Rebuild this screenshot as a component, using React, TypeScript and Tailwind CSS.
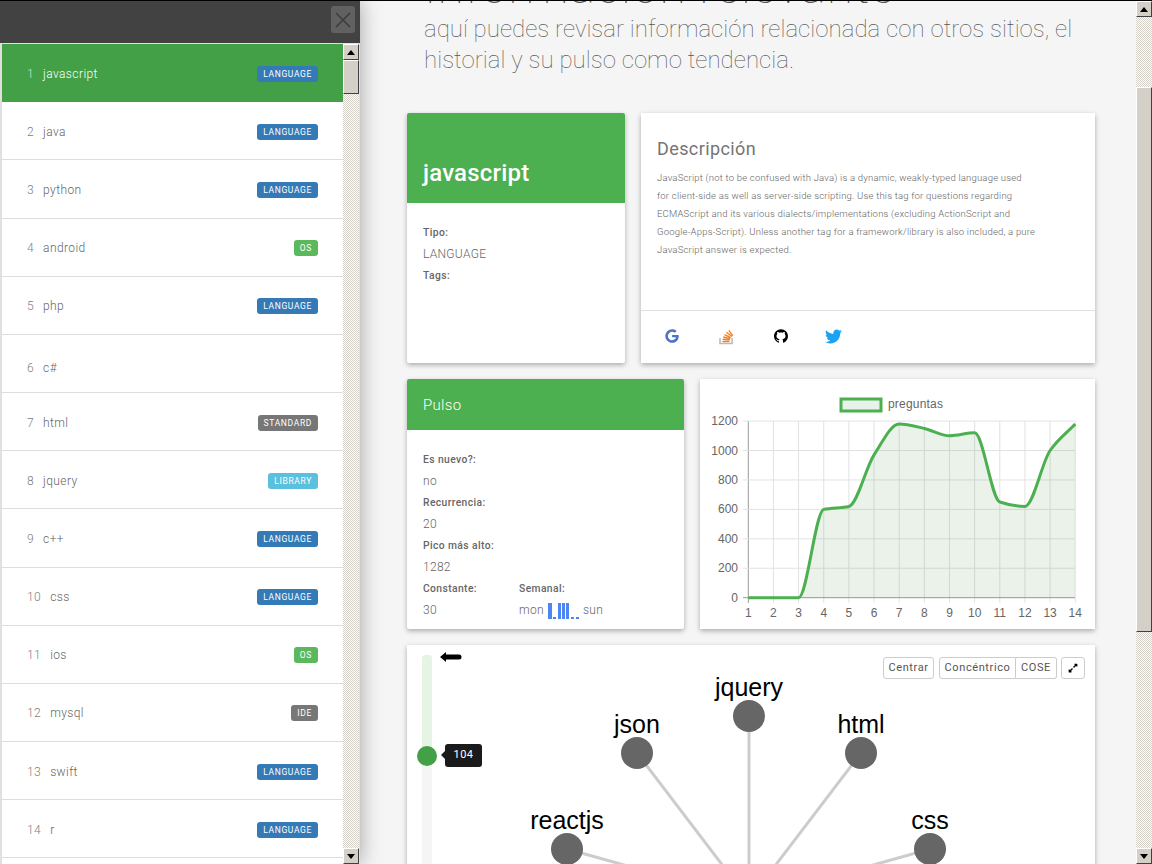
import { FaGoogle, FaTwitter, FaExpandAlt } from "react-icons/fa";
import { AiOutlineGithub } from "react-icons/ai";

const roboto = "font-['Roboto',sans-serif]";

const tags = [
  { n: 1, name: "javascript", badge: "LANGUAGE" },
  { n: 2, name: "java", badge: "LANGUAGE" },
  { n: 3, name: "python", badge: "LANGUAGE" },
  { n: 4, name: "android", badge: "OS" },
  { n: 5, name: "php", badge: "LANGUAGE" },
  { n: 6, name: "c#", badge: "" },
  { n: 7, name: "html", badge: "STANDARD" },
  { n: 8, name: "jquery", badge: "LIBRARY" },
  { n: 9, name: "c++", badge: "LANGUAGE" },
  { n: 10, name: "css", badge: "LANGUAGE" },
  { n: 11, name: "ios", badge: "OS" },
  { n: 12, name: "mysql", badge: "IDE" },
  { n: 13, name: "swift", badge: "LANGUAGE" },
  { n: 14, name: "r", badge: "LANGUAGE" },
];

const badgeColor: Record<string, string> = {
  LANGUAGE: "bg-[#337ab7]",
  OS: "bg-[#5cb85c]",
  STANDARD: "bg-[#777777]",
  LIBRARY: "bg-[#5bc0de]",
  IDE: "bg-[#777777]",
};

const values = [0, 0, 0, 600, 620, 970, 1180, 1150, 1100, 1120, 650, 620, 1000, 1180];
const baseY = 218.7;
const scaleY = 0.1472;

// monotone spline through the points
function linePath() {
  const pts = values.map((v, i) => [48.3 + i * 25.15, baseY - v * scaleY]);
  const dx = 25.15;
  const slopes = pts.slice(0, -1).map((p, i) => (pts[i + 1][1] - p[1]) / dx);
  const tangents = pts.map((_, i) => {
    if (i === 0) return slopes[0];
    if (i === pts.length - 1) return slopes[i - 1];
    const a = slopes[i - 1];
    const b = slopes[i];
    return a * b <= 0 ? 0 : (2 * a * b) / (a + b);
  });
  let d = `M${pts[0][0]} ${pts[0][1]}`;
  for (let i = 0; i < pts.length - 1; i++) {
    const p1 = pts[i];
    const p2 = pts[i + 1];
    d += ` C${p1[0] + dx / 3} ${p1[1] + (tangents[i] * dx) / 3} ${p2[0] - dx / 3} ${p2[1] - (tangents[i + 1] * dx) / 3} ${p2[0]} ${p2[1]}`;
  }
  return d;
}

function ScrollArrow({ up }: { up?: boolean }) {
  return (
    <div className="w-[16px] h-[16px] shrink-0 bg-[#d4d0c8] border border-t-white border-l-white border-r-[#404040] border-b-[#404040] flex items-center justify-center">
      <svg width="8" height="5" viewBox="0 0 8 5">
        <path d={up ? "M4 0 8 5H0Z" : "M0 0H8L4 5Z"} fill="#000" />
      </svg>
    </div>
  );
}

function Scrollbar({ before, thumb }: { before: string; thumb: string }) {
  return (
    <div className="w-[16px] shrink-0 h-full flex flex-col bg-[repeating-conic-gradient(#d4d0c8_0%_25%,#ffffff_0%_50%)] bg-[length:2px_2px]">
      <ScrollArrow up />
      <div className={before} />
      <div className={`${thumb} shrink-0 bg-[#d4d0c8] border border-t-white border-l-white border-r-[#404040] border-b-[#404040]`} />
      <div className="flex-1" />
      <ScrollArrow />
    </div>
  );
}

function Sidebar() {
  return (
    <aside className="w-[360px] shrink-0 h-full flex flex-col bg-[#e0e0e0] shadow-[0_0_20px_rgba(0,0,0,0.35)] z-10">
      <div className="h-[42px] shrink-0 bg-[#424242] flex justify-end pt-[5px] pr-[5px]">
        <div className="w-[24px] h-[27px] rounded-[3px] bg-[#616161] flex items-center justify-center">
          <svg width="16" height="16" viewBox="0 0 16 16">
            <path d="M1 1 15 15M15 1 1 15" stroke="#3c3c3c" strokeWidth="1.6" />
          </svg>
        </div>
      </div>
      <div className="flex-1 min-h-0 flex pl-[2px] pr-[1px] pt-[1px]">
        <ul className="flex-1 min-w-0 bg-white overflow-hidden">
          {tags.map((t) => (
            <li
              key={t.n}
              className={`h-[58.18px] shrink-0 flex items-center pl-[25px] pr-[25px] text-[12px] tracking-[0.4px] font-light ${t.badge ? "pt-[2px]" : "pt-[10px]"} ${roboto} ${
                t.n === 1 ? "bg-[#43a047] text-white" : "bg-white text-[#666666] border-b border-[#dddddd]"
              }`}
            >
              <span className={t.n === 1 ? "text-[#c8e6c9] mr-[9px]" : "text-[#808080] mr-[9px]"}>{t.n}</span>
              <span className="flex-1">{t.name}</span>
              {t.badge && (
                <span className={`${badgeColor[t.badge]} text-white text-[8.5px] font-normal tracking-[0.65px] leading-[16px] h-[16px] px-[6px] rounded-[3px]`}>
                  {t.badge}
                </span>
              )}
            </li>
          ))}
        </ul>
        <Scrollbar before="h-0" thumb="h-[34px]" />
      </div>
    </aside>
  );
}

function Label({ children }: { children: string }) {
  return <div className="text-[10.3px] font-medium text-[#666666] leading-[14px] tracking-[0.4px]">{children}</div>;
}

function Value({ children }: { children: React.ReactNode }) {
  return <div className="text-[12px] font-light text-[#666666] leading-[17px] mt-[6px] mb-[6px] tracking-[0.3px]">{children}</div>;
}

function StackIcon() {
  return (
    <svg width="16" height="18" viewBox="0 0 16 18">
      <path d="M2 11v5.5h12V11" fill="none" stroke="#bcbbbb" strokeWidth="1.6" />
      <path d="M4.5 14.5h7M4.7 12.3l7 .6M5.3 10l6.8 1.8M6.5 7.6l6.3 3M8.4 5.3l5.6 4.2M10.8 3.4l4 5.3" stroke="#f48024" strokeWidth="1.4" />
    </svg>
  );
}

function TagCard() {
  return (
    <div className="w-[218px] h-[250px] shrink-0 bg-white rounded-[2px] shadow-[0_2px_5px_rgba(0,0,0,0.3)] overflow-hidden">
      <div className="h-[90px] bg-[#4caf50] px-[16px] pt-[45px] text-[24px] leading-[30px] font-medium text-white tracking-[0.2px]">javascript</div>
      <div className="px-[16px] pt-[23px]">
        <Label>Tipo:</Label>
        <Value>LANGUAGE</Value>
        <Label>Tags:</Label>
      </div>
    </div>
  );
}

function DescriptionCard() {
  return (
    <div className="flex-1 h-[250px] bg-white shadow-[0_2px_5px_rgba(0,0,0,0.3)] flex flex-col">
      <div className="flex-1 px-[16px] pt-[24px]">
        <h2 className="text-[18px] leading-[24px] text-[#757575] tracking-[0.4px] mb-[8px]">Descripción</h2>
        <p className="w-[379px] text-[9.5px] font-light leading-[18px] text-[#666666] tracking-[0.2px]">
          JavaScript (not to be confused with Java) is a dynamic, weakly-typed language used for client-side as well as server-side scripting. Use this tag for questions regarding ECMAScript and its various dialects/implementations (excluding ActionScript and Google-Apps-Script). Unless another tag for a framework/library is also included, a pure JavaScript answer is expected.
        </p>
      </div>
      <div className="h-[53px] shrink-0 border-t border-[#e0e0e0] flex items-center pl-[24px] pb-[2px] gap-[39px]">
        <FaGoogle size={14} className="text-[#4d74c4]" />
        <StackIcon />
        <AiOutlineGithub size={16} className="text-black" />
        <FaTwitter size={17} className="text-[#1da1f2] -ml-[3px]" />
      </div>
    </div>
  );
}

function PulseCard() {
  return (
    <div className="w-[277px] h-[250px] shrink-0 bg-white rounded-[2px] shadow-[0_2px_5px_rgba(0,0,0,0.3)] overflow-hidden">
      <div className="h-[51px] bg-[#4caf50] px-[16px] pt-[2px] flex items-center text-[15px] font-light text-white tracking-[0.3px]">Pulso</div>
      <div className="px-[16px] pt-[23px]">
        <Label>Es nuevo?:</Label>
        <Value>no</Value>
        <Label>Recurrencia:</Label>
        <Value>20</Value>
        <Label>Pico más alto:</Label>
        <Value>1282</Value>
        <div className="flex">
          <div className="w-[96px]">
            <Label>Constante:</Label>
            <Value>30</Value>
          </div>
          <div>
            <Label>Semanal:</Label>
            <Value>
              <span className="flex items-center gap-[4px]">
                mon
                <svg width="31" height="16" viewBox="0 0 31 16">
                  <path d="M0 0h4v16H0zM5 14h3v2H5zM10 0h3v16h-3zM14 0h3v16h-3zM18 0h3v16h-3zM23 14h3v2h-3zM28 14h3v2h-3z" fill="#4d86f0" />
                </svg>
                sun
              </span>
            </Value>
          </div>
        </div>
      </div>
    </div>
  );
}

function ChartCard() {
  const line = linePath();
  const xs = Array.from({ length: 14 }, (_, i) => 48.3 + i * 25.15);
  const ys = [0, 200, 400, 600, 800, 1000, 1200];
  return (
    <div className="flex-1 h-[250px] bg-white shadow-[0_2px_5px_rgba(0,0,0,0.3)]">
      <svg width="395" height="250" viewBox="0 0 395 250" className="block font-['Liberation_Sans',sans-serif]">
        <rect x="141" y="20" width="40" height="12" fill="#e8f1ea" stroke="#4caf50" strokeWidth="3" />
        <text x="188" y="29" fontSize="12" letterSpacing="0.2" fill="#666">preguntas</text>
        {xs.map((x, i) => (
          <g key={i}>
            <path d={`M${x} 42V224`} stroke={i === 0 ? "#999" : "#e2e2e2"} />
            <text x={x} y="238" fontSize="12" fill="#666" textAnchor="middle">{i + 1}</text>
          </g>
        ))}
        {ys.map((v) => (
          <g key={v}>
            <path d={`M43 ${baseY - v * scaleY}H375`} stroke={v === 0 ? "#999" : "#e2e2e2"} />
            <text x="38" y={baseY + 4 - v * scaleY} fontSize="12" fill="#666" textAnchor="end">{v}</text>
          </g>
        ))}
        <path d={`${line} L375 ${baseY} L48.3 ${baseY}Z`} fill="rgba(46,125,50,0.1)" />
        <path d={line} fill="none" stroke="#4caf50" strokeWidth="3" />
      </svg>
    </div>
  );
}

function GraphButton({ children, className }: { children: React.ReactNode; className?: string }) {
  return (
    <span className={`h-[22px] flex items-center justify-center border border-[#cccccc] text-[11px] text-[#555555] tracking-[0.6px] ${className ?? ""}`}>
      {children}
    </span>
  );
}

const nodes = [
  { name: "jquery", x: 342, y: 71 },
  { name: "json", x: 230, y: 108 },
  { name: "html", x: 454, y: 108 },
  { name: "reactjs", x: 160, y: 204 },
  { name: "css", x: 523, y: 204 },
];

function GraphCard() {
  return (
    <div className="relative h-[400px] bg-white shadow-[0_2px_5px_rgba(0,0,0,0.3)]">
      {/* cytoscape canvas */}
      <svg width="688" height="400" viewBox="0 0 688 400" className="absolute inset-0 font-['Liberation_Sans',sans-serif]">
        {nodes.map((n) => (
          <path key={n.name} d={`M${n.x} ${n.y}L342 255`} stroke="#cccccc" strokeWidth="3" />
        ))}
        {nodes.map((n) => (
          <g key={n.name}>
            <circle cx={n.x} cy={n.y} r="16" fill="#666666" />
            <text x={n.x} y={n.y - 20.5} fontSize="25" fill="#000" textAnchor="middle">{n.name}</text>
          </g>
        ))}
      </svg>

      {/* zoom slider */}
      <div className="absolute left-[15px] top-[10px] w-[10px] h-[390px] rounded-[4px] bg-[#f5f5f5] overflow-hidden">
        <div className="h-[95px] bg-[#e6f4e6]" />
      </div>
      <div className="absolute left-[10px] top-[101px] w-[20px] h-[20px] rounded-full bg-[#43a047]" />
      <div className="absolute left-[38px] top-[99px] w-[37px] h-[23px] rounded-[3px] bg-[#1a1a1a] flex items-center justify-center text-white text-[11px] tracking-[0.5px] font-['Roboto',sans-serif]">
        <span className="absolute left-[-4px] top-[7px] w-0 h-0 border-y-[4px] border-y-transparent border-r-[4px] border-r-[#1a1a1a]" />
        104
      </div>
      <svg width="22" height="10" viewBox="0 0 22 10" className="absolute left-[33px] top-[7px]">
        <path d="M0 5 6 0v2.5h13a2.5 2.5 0 0 1 0 5H6V10Z" fill="#000" />
      </svg>

      {/* layout buttons */}
      <div className="absolute right-[10px] top-[12px] flex">
        <GraphButton className="w-[51px] rounded-[3px] mr-[5px]">Centrar</GraphButton>
        <GraphButton className="w-[77px] rounded-l-[3px]">Concéntrico</GraphButton>
        <GraphButton className="w-[41px] rounded-r-[3px] border-l-0 mr-[4px]">COSE</GraphButton>
        <GraphButton className="w-[24px] rounded-[3px]">
          <FaExpandAlt size={10} className="text-black" />
        </GraphButton>
      </div>
    </div>
  );
}

export default function App() {
  return (
    <div className={`h-[864px] w-[1152px] overflow-hidden flex flex-col bg-[#f5f5f5] ${roboto}`}>
      <div className="h-px shrink-0 bg-black" />
      <div className="flex-1 min-h-0 flex">
        <Sidebar />
        <main className="flex-1 min-w-0 overflow-hidden">
          <div className="pl-[47px] pr-[41px] -mt-[39px]">
            <div className="pl-[17px] font-thin text-[#555555]">
              <h1 className="text-[48px] leading-[50px] mb-[2px] tracking-[1px]">Información relevante</h1>
              <p className="w-[660px] text-[24px] leading-[31px] tracking-[0.03px]">aquí puedes revisar información relacionada con otros sitios, el historial y su pulso como tendencia.</p>
            </div>
            <div className="mt-[37px] flex flex-col gap-[16px]">
              <div className="flex gap-[16px]">
                <TagCard />
                <DescriptionCard />
              </div>
              <div className="flex gap-[16px]">
                <PulseCard />
                <ChartCard />
              </div>
              <GraphCard />
            </div>
          </div>
        </main>
        <Scrollbar before="h-[70px]" thumb="h-[545px]" />
      </div>
    </div>
  );
}
